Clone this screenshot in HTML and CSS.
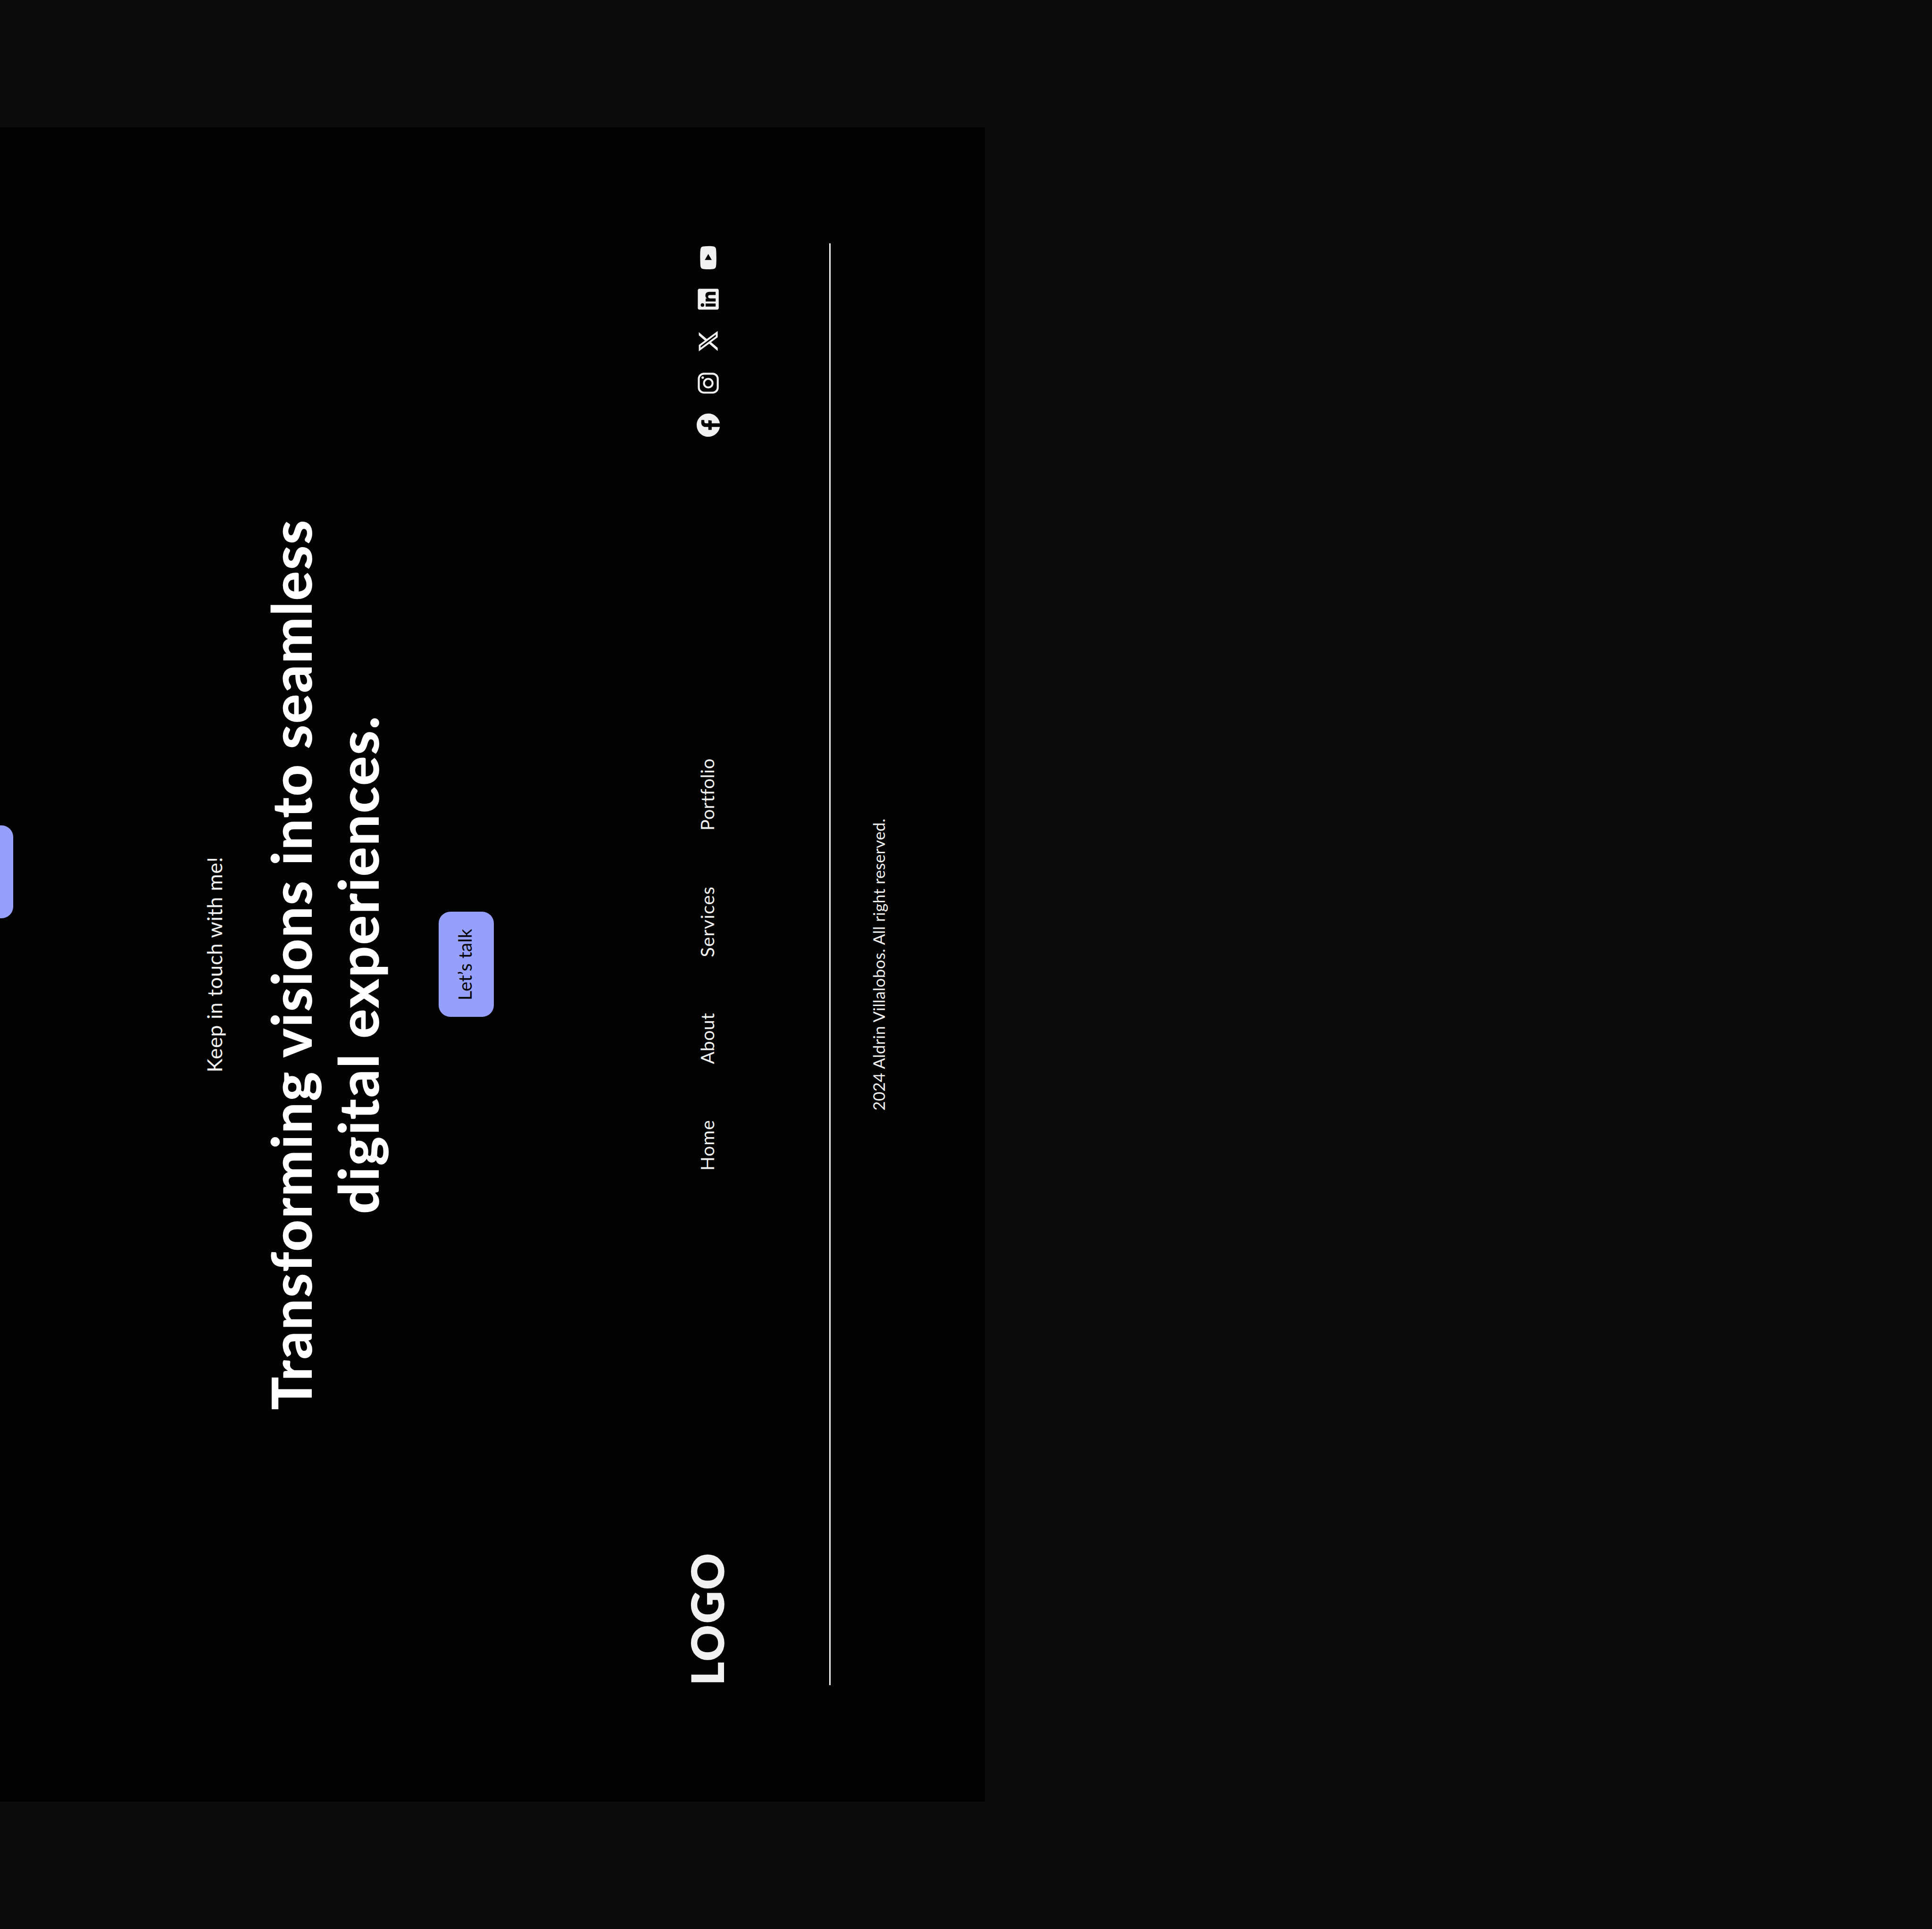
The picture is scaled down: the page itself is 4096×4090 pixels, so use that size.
FILE: index.html
```
<!DOCTYPE html>
<html lang="en">
<head>
<meta charset="utf-8">
<title>Portfolio</title>
<link rel="stylesheet" href="styles.css">
</head>
<body>
<div class="canvas">
  <main class="frame">
    <div class="button button-previous"></div>
    <section class="contact">
      <p class="eyebrow">Keep in touch with me!</p>
      <h1 class="headline">
        <span class="headline-first">Transforming visions into seamless</span>
        <span class="headline-second">digital experiences.</span>
      </h1>
      <a class="button button-talk">Let’s talk</a>
    </section>
    <footer class="footer">
      <div class="footer-row">
        <div class="logo">LOGO</div>
        <nav class="nav">
          <a class="nav-home">Home</a>
          <a class="nav-about">About</a>
          <a class="nav-services">Services</a>
          <a class="nav-portfolio">Portfolio</a>
        </nav>
        <div class="social">
          <svg class="icon" viewBox="0 0 24 24"><path fill="currentColor" d="M12 2.04C6.5 2.04 2 6.53 2 12.06C2 17.06 5.66 21.21 10.44 21.96V14.96H7.9V12.06H10.44V9.85C10.44 7.34 11.93 5.96 14.22 5.96C15.31 5.96 16.45 6.15 16.45 6.15V8.62H15.19C13.95 8.62 13.56 9.39 13.56 10.16V12.06H16.34L15.89 14.96H13.56V21.96A10 10 0 0 0 22 12.06C22 6.53 17.5 2.04 12 2.04Z"/></svg>
          <svg class="icon" viewBox="0 0 24 24"><rect x="3.85" y="3.85" width="16.3" height="16.3" rx="4.4" fill="none" stroke="currentColor" stroke-width="1.7"/><circle cx="12" cy="12" r="3.7" fill="none" stroke="currentColor" stroke-width="1.65"/><circle cx="16.8" cy="7.2" r="1.08" fill="currentColor"/></svg>
          <svg class="icon" viewBox="0 0 24 24"><path fill="currentColor" transform="translate(2.17 1.99) scale(.0383 .0391)" d="M389.2 48h70.6L305.6 224.2 487 464H345L233.7 318.6 106.5 464H35.8L200.7 275.5 26.8 48H172.4L272.9 180.9 389.2 48zM364.4 421.8h39.1L151.1 88h-42L364.4 421.8z"/></svg>
          <svg class="icon" viewBox="0 0 24 24"><path fill="currentColor" transform="translate(3 3) scale(.75)" d="M20.447 20.452h-3.554v-5.569c0-1.328-.027-3.037-1.852-3.037-1.853 0-2.136 1.445-2.136 2.939v5.667H9.351V9h3.414v1.561h.046c.477-.9 1.637-1.85 3.37-1.85 3.601 0 4.267 2.37 4.267 5.455v6.286zM5.337 7.433a2.062 2.062 0 0 1-2.063-2.065 2.064 2.064 0 1 1 2.063 2.065zm1.782 13.019H3.555V9h3.564v11.452zM22.225 0H1.771C.792 0 0 .774 0 1.729v20.542C0 23.227.792 24 1.771 24h20.451C23.2 24 24 23.227 24 22.271V1.729C24 .774 23.2 0 22.222 0h.003z"/></svg>
          <svg class="icon" viewBox="0 0 24 24"><path fill="currentColor" d="M10 15l5.19-3L10 9v6m11.56-7.83c.13.47.22 1.1.28 1.9.07.8.1 1.49.1 2.09L22 12c0 2.19-.16 3.8-.44 4.83-.25.9-.83 1.48-1.73 1.73-.47.13-1.33.22-2.65.28-1.3.07-2.49.1-3.59.1L12 19c-4.19 0-6.8-.16-7.83-.44-.9-.25-1.48-.83-1.73-1.73-.13-.47-.22-1.1-.28-1.9-.07-.8-.1-1.49-.1-2.09L2 12c0-2.19.16-3.8.44-4.83.25-.9.83-1.48 1.73-1.73.47-.13 1.33-.22 2.65-.28 1.3-.07 2.49-.1 3.59-.1L12 5c4.19 0 6.8.16 7.83.44.9.25 1.48.83 1.73 1.73z"/></svg>
        </div>
      </div>
      <hr class="rule">
      <p class="copyright">2024 Aldrin Villalobos. All right reserved.</p>
    </footer>
  </main>
</div>
</body>
</html>
```
FILE: styles.css
```
* {
  box-sizing: border-box;
  margin: 0;
  padding: 0;
}

html, body {
  width: 4096px;
  height: 4090px;
  overflow: hidden;
  background: #0c0c0c;
}

/* The whole canvas reads from bottom to top. */
.canvas {
  width: 4090px;
  height: 4096px;
  transform-origin: 0 0;
  transform: translateY(4090px) rotate(-90deg);
  background: #0c0c0c;
  color: #f1f1f1;
  font-family: Lato, "Liberation Sans", sans-serif;
  text-rendering: geometricPrecision;
  white-space: nowrap;
}

.frame {
  width: 3550px;
  height: 2088px;
  margin: 0 auto;
  overflow: hidden;
  background: #030303;
  display: flex;
  flex-direction: column;
}

.button {
  display: block;
  flex: none;
  height: 117.4px;
  border-radius: 24.7px;
  background: #96a0fb;
}

.button-previous {
  width: 197.2px;
  margin: -89px 0 0 1873.3px;
}

.contact {
  display: flex;
  flex-direction: column;
  align-items: center;
  padding-top: 399.3px;
}

.eyebrow {
  font-size: 43.8px;
  line-height: 54px;
  letter-spacing: 0.64px;
}

.headline {
  margin-top: 63.4px;
  color: #fff;
  font-size: 117.2px;
  font-weight: 900;
  line-height: 142px;
  text-align: center;
}

.headline span {
  display: block;
}

.headline-first {
  letter-spacing: 2.3px;
}

.headline-second {
  letter-spacing: 2.5px;
}

.button-talk {
  width: 223px;
  margin-top: 100.9px;
  padding-top: 33.4px;
  color: #030303;
  font-size: 39px;
  line-height: 47.34px;
  letter-spacing: 0.2px;
  text-align: center;
}

.footer {
  margin-top: 394.2px;
  padding: 0 246.5px;
}

.footer-row {
  display: grid;
  grid-template-columns: 1fr auto 1fr;
  align-items: center;
  height: 116px;
}

.logo {
  font-size: 95.2px;
  font-weight: 800;
  line-height: 115.8px;
  letter-spacing: 2.7px;
}

.nav {
  display: flex;
  gap: 118.1px;
  font-size: 39px;
  line-height: 48px;
}

.nav-home { letter-spacing: 1px; }
.nav-about { letter-spacing: 0.5px; }
.nav-services { letter-spacing: 1.16px; }
.nav-portfolio { letter-spacing: 0.5px; }

.social {
  display: flex;
  justify-content: flex-end;
  gap: 29.59px;
  padding-top: 5px;
}

.icon {
  display: block;
  width: 59.17px;
  height: 59.17px;
}

.rule {
  height: 2.6px;
  margin-top: 200.7px;
  border: 0;
  background: #f1f1f1;
}

.copyright {
  margin-top: 82.2px;
  font-size: 34.1px;
  line-height: 41.4px;
  letter-spacing: 0.28px;
  text-align: center;
}
```
